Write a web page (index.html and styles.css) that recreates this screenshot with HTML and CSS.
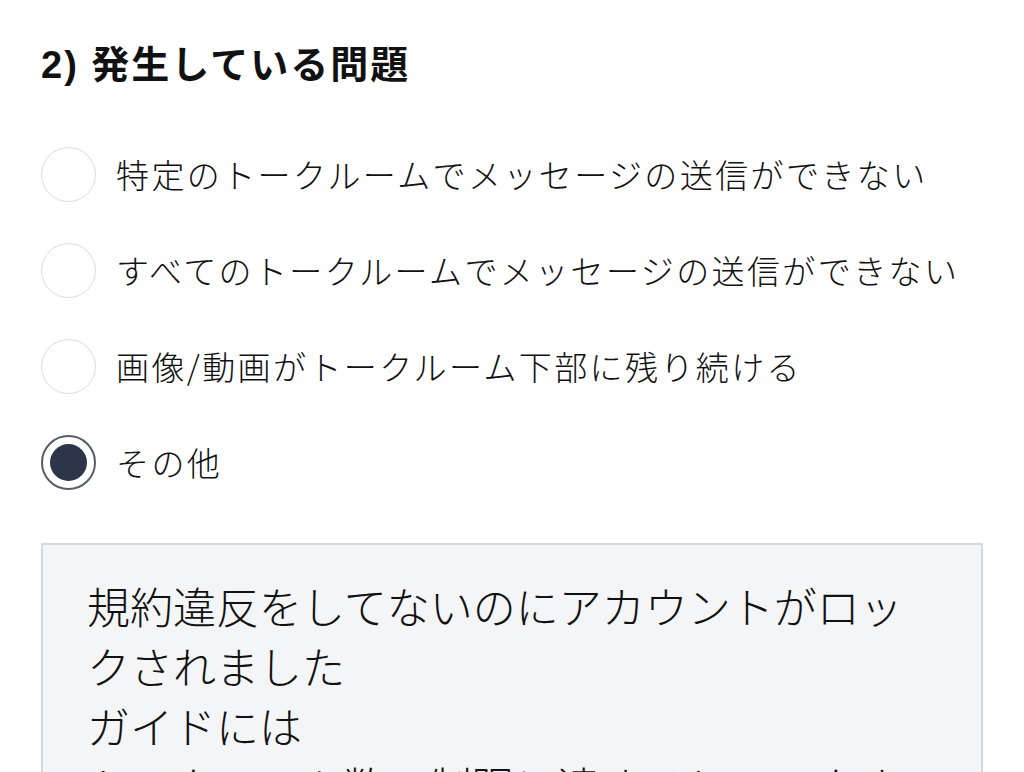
FILE: index.html
```html
<!DOCTYPE html>
<html lang="ja">
<head>
<meta charset="utf-8">
<link rel="stylesheet" href="styles.css">
</head>
<body>
<main class="form">
  <h2 class="title">2) 発生している問題</h2>
  <div class="options">
    <label class="option"><span class="radio"></span><span class="label">特定のトークルームでメッセージの送信ができない</span></label>
    <label class="option"><span class="radio"></span><span class="label">すべてのトークルームでメッセージの送信ができない</span></label>
    <label class="option"><span class="radio"></span><span class="label">画像/動画がトークルーム下部に残り続ける</span></label>
    <label class="option"><span class="radio checked"></span><span class="label">その他</span></label>
  </div>
  <div class="textbox">規約違反をしてないのにアカウントがロックされました
ガイドには
トークルーム数の制限に達するとロックされると表記があるが</div>
</main>
</body>
</html>
```

FILE: styles.css
```css
html, body {
  margin: 0;
  padding: 0;
  background: #ffffff;
  height: 772px;
  overflow: hidden;
}
body {
  font-family: "Noto Sans CJK JP", "Liberation Sans", sans-serif;
  color: #111111;
}
.form {
  padding: 37px 41px 0 41px;
}
.title {
  margin: 0;
  font-family: "Liberation Sans", "Noto Sans CJK JP", sans-serif;
  font-weight: 700;
  font-size: 38px;
  line-height: 56px;
  letter-spacing: 2px;
}
.options {
  margin-top: 33px;
  display: flex;
  flex-direction: column;
}
.option {
  height: 96px;
  display: flex;
  align-items: center;
  gap: 20px;
}
.radio {
  box-sizing: border-box;
  width: 55px;
  height: 55px;
  border-radius: 50%;
  border: 1.5px solid #dadbdf;
  background: #fff;
  flex: none;
  display: flex;
  align-items: center;
  justify-content: center;
}
.radio.checked {
  border: 2px solid #5a5d66;
}
.radio.checked::after {
  content: "";
  width: 37px;
  height: 37px;
  border-radius: 50%;
  background: #2c3549;
}
.label {
  font-size: 33px;
  letter-spacing: 2.4px;
  font-weight: 300;
  color: #111;
}
.textbox {
  margin-top: 33px;
  box-sizing: border-box;
  width: 942px;
  height: 260px;
  background: #f4f5f7;
  border: 2px solid #d6d8de;
  border-bottom: none;
  padding: 30px 44px 0 44px;
  font-size: 43px;
  line-height: 60px;
  white-space: pre-wrap;
  font-weight: 300;
  color: #111;
  overflow: hidden;
}
```
